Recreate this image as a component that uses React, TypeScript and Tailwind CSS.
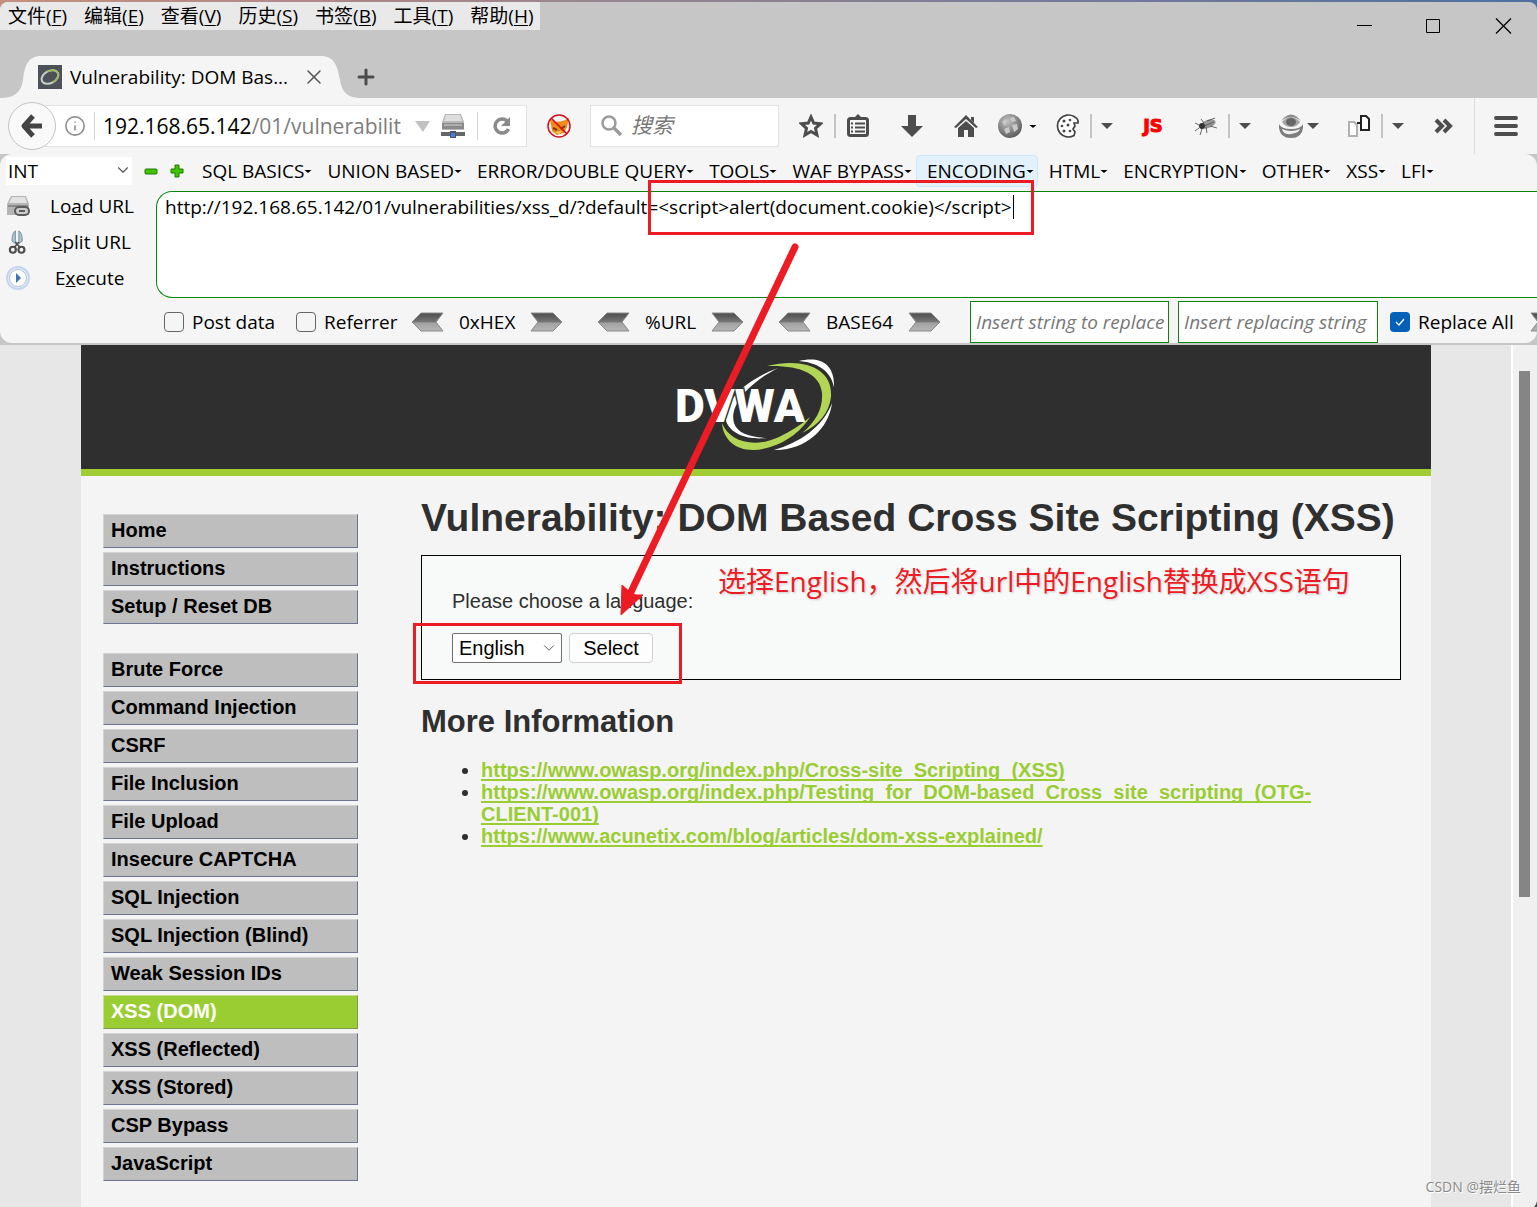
import React from "react";
import { ChevronDown, Info, Plus, X } from "lucide-react";

const UI_FONT = "font-['Open_Sans','Noto_Sans_CJK_SC',sans-serif]";

const appMenus = [
  { label: "文件", mnemonic: "F" },
  { label: "编辑", mnemonic: "E" },
  { label: "查看", mnemonic: "V" },
  { label: "历史", mnemonic: "S" },
  { label: "书签", mnemonic: "B" },
  { label: "工具", mnemonic: "T" },
  { label: "帮助", mnemonic: "H" },
];

const hackMenus = [
  "SQL BASICS",
  "UNION BASED",
  "ERROR/DOUBLE QUERY",
  "TOOLS",
  "WAF BYPASS",
  "ENCODING",
  "HTML",
  "ENCRYPTION",
  "OTHER",
  "XSS",
  "LFI",
];

const navGroups = [
  ["Home", "Instructions", "Setup / Reset DB"],
  [
    "Brute Force",
    "Command Injection",
    "CSRF",
    "File Inclusion",
    "File Upload",
    "Insecure CAPTCHA",
    "SQL Injection",
    "SQL Injection (Blind)",
    "Weak Session IDs",
    "XSS (DOM)",
    "XSS (Reflected)",
    "XSS (Stored)",
    "CSP Bypass",
    "JavaScript",
  ],
];

const links = [
  "https://www.owasp.org/index.php/Cross-site_Scripting_(XSS)",
  "https://www.owasp.org/index.php/Testing_for_DOM-based_Cross_site_scripting_(OTG-CLIENT-001)",
  "https://www.acunetix.com/blog/articles/dom-xss-explained/",
];

const Caret = () => (
  <svg className="w-3 h-2 shrink-0" viewBox="0 0 12 8" fill="#4d4d4d">
    <path d="M0 1h12L6 7z" />
  </svg>
);

const SmallCaret = () => (
  <svg className="w-2 h-2 shrink-0" viewBox="0 0 8 8">
    <path d="M0.500 3h7L4 6z" />
  </svg>
);

const Divider = () => <span className="w-0.5 h-6 bg-[#c4c4c4] shrink-0" />;

interface ToolProps {
  label: string;
  children: React.ReactNode;
}

const Tool = ({ label, children }: ToolProps) => (
  <button aria-label={label} className="w-6 h-6 shrink-0">
    {children}
  </button>
);

const ArrowButton = ({ right, label }: { right?: boolean; label: string }) => (
  <button aria-label={label} className="shrink-0">
    <svg width="34" height="20" viewBox="0 0 34 20">
      <defs>
        <linearGradient id="steel" x1="0" y1="0" x2="0" y2="1">
          <stop offset="0" stopColor="#4c4c4c" />
          <stop offset="0.500" stopColor="#777" />
          <stop offset="0.550" stopColor="#a2a2a2" />
          <stop offset="1" stopColor="#b5b5b5" />
        </linearGradient>
      </defs>
      <path
        d={right ? "M2 1H24L33 10L24 19H2L9 10z" : "M32 1H10L1 10L10 19H32L25 10z"}
        fill="url(#steel)"
        stroke="#8a8a8a"
      />
    </svg>
  </button>
);

const TitleBar = () => (
  <header className="bg-[#c6c6c6] rounded-t-lg flex items-start justify-between h-24">
    <div className="flex flex-col">
      <nav className="flex h-7 w-[540px] items-center gap-[17px] rounded-tl-lg bg-[#e9e9e9] pl-2 text-[19px] leading-7 whitespace-nowrap">
        {appMenus.map((menu) => (
          <button key={menu.mnemonic}>
            {menu.label}(<u className="underline-offset-2">{menu.mnemonic}</u>)
          </button>
        ))}
      </nav>
      <div className="mt-[26px] flex items-center">
        <div className="relative flex h-[42px] w-[346px] items-center pl-[38px]">
          <svg
            className="absolute top-0 left-0"
            width="362"
            height="42"
            viewBox="0 0 362 42"
            fill="#f5f5f5"
          >
            <path d="M0 42C15 42 21 36 23 24C25 7 29 0 42 0H320C333 0 337 7 340 24C342 36 347 42 362 42z" />
          </svg>
          <svg className="relative" width="24" height="24" viewBox="0 0 24 24">
            <rect width="24" height="24" fill="#4d525a" />
            <g fill="none" transform="rotate(-28 12 12)">
              <ellipse cx="12" cy="12" rx="9" ry="6" stroke="#c9d0c6" strokeWidth="2" />
              <path d="M12 6C18 6 21 9 21 12S17 18 12 18" stroke="#9dbb4a" strokeWidth="1.500" />
            </g>
          </svg>
          <span className="relative ml-2 w-[222px] text-[19px] leading-6 whitespace-nowrap">
            Vulnerability: DOM Bas...
          </span>
          <button aria-label="Close tab" className="relative ml-2.5">
            <X className="size-6 text-[#555]" strokeWidth={1.5} />
          </button>
        </div>
        <button aria-label="New tab" className="relative ml-2">
          <Plus className="size-6 text-[#4a4a4a]" strokeWidth={3} />
        </button>
      </div>
    </div>
    <div className="flex items-center gap-[50px] pt-3 pr-6">
      <button aria-label="Minimize">
        <svg width="16" height="20" viewBox="0 0 16 20">
          <path d="M0 11.500H15" stroke="#000" />
        </svg>
      </button>
      <button aria-label="Maximize">
        <svg width="20" height="20" viewBox="0 0 20 20">
          <path d="M3.500 5.500H16.500V18.500H3.500z" stroke="#000" fill="none" />
        </svg>
      </button>
      <button aria-label="Close">
        <svg width="20" height="20" viewBox="0 0 20 20">
          <path d="M3 4.500L18 19.500M18 4.500L3 19.500" stroke="#000" strokeWidth="1.300" />
        </svg>
      </button>
    </div>
  </header>
);

const AddressBar = () => (
  <div className="flex min-w-0 flex-1 items-center">
    <button
      aria-label="Back"
      className="relative z-10 flex size-12 shrink-0 items-center justify-center rounded-full border border-[#c4c4c4] bg-[#f9f9f9]"
    >
      <svg width="24" height="24" viewBox="0 0 24 24" fill="none" stroke="#444" strokeWidth="5">
        <path d="M13 2L4 12L13 22M4 12H22" strokeLinejoin="round" />
      </svg>
    </button>
    <div className="-ml-6 flex h-[42px] min-w-0 flex-1 items-center border border-[#e2e2e2] bg-white pl-[31px]">
      <Info className="size-[22px] shrink-0 text-[#8d8d8d]" strokeWidth={1.75} />
      <span className="ml-2 h-7 w-px shrink-0 bg-[#d5d5d5]" />
      <span className="ml-2 min-w-0 flex-1 text-[21px] leading-8 whitespace-nowrap text-[#7d7d7d]">
        <span className="text-black">192.168.65.142</span>/01/vulnerabilit
      </span>
      <svg className="ml-2 shrink-0" width="16" height="12" viewBox="0 0 16 12" fill="#c1c1c1">
        <path d="M0 1H15L8 12z" />
      </svg>
      <svg className="ml-2.5 shrink-0" width="24" height="24" viewBox="0 0 24 24">
        <path d="M4 0H20L23 8V16H1V8z" fill="#b8b8b8" />
        <path d="M5 1H19L21 7H3z" fill="#dedede" />
        <path d="M1 9H23V15H1z" fill="#8a8a8a" />
        <path d="M3 11H21" stroke="#d5d5d5" />
        <path d="M0 18H24V22H0z" fill="#666" />
        <path d="M9 17H15V24H9z" fill="#555" />
        <rect x="10" y="19" width="4" height="4" fill="#3f82ee" />
      </svg>
      <span className="ml-3 h-7 w-px shrink-0 bg-[#d5d5d5]" />
      <button aria-label="Reload" className="mx-3 shrink-0">
        <svg width="24" height="24" viewBox="0 0 24 24">
          <path d="M17 7A7 7 0 1 0 18.500 15" fill="none" stroke="#8a8a8a" strokeWidth="3.500" />
          <path d="M20 3V12H11z" fill="#8a8a8a" />
        </svg>
      </button>
    </div>
  </div>
);

const Toolbar = () => (
  <div className="flex h-14 items-center bg-[#f5f5f5] pl-2">
    <AddressBar />
    <button aria-label="FoxyProxy" className="ml-5 shrink-0">
      <svg width="24" height="24" viewBox="0 0 24 24">
        <path d="M3 5L8 8L16 7L22 4L20 13L17 19L10 21L5 17z" fill="#f08a1c" />
        <path d="M6 14L10 16M14 15L18 12" stroke="#7c3d05" strokeWidth="2" />
        <path d="M8 18L16 17L12 20z" fill="#fbd26b" />
        <circle cx="12" cy="12" r="11" fill="none" stroke="#d5101c" strokeWidth="1.500" />
        <path d="M4 4L20 20" stroke="#d5101c" strokeWidth="1.700" />
      </svg>
    </button>
    <label className="ml-[19px] flex h-[42px] w-[189px] shrink-0 items-center border border-[#e2e2e2] bg-white pl-2.5">
      <svg width="22" height="22" viewBox="0 0 22 22" fill="none" stroke="#9b9b9b">
        <circle cx="8" cy="8" r="6.500" strokeWidth="2.500" />
        <path d="M13 13L20 20" strokeWidth="3.500" />
      </svg>
      <input
        aria-label="搜索"
        placeholder="搜索"
        className="ml-2 w-32 text-[21px] italic outline-none placeholder:text-[#777]"
      />
    </label>
    <div className="ml-5 flex shrink-0 items-center">
      <Tool label="Bookmark">
        <svg viewBox="0 0 24 24" fill="none" stroke="#4d4d4d" strokeWidth="3">
          <path d="M12 3L14.700 9L21.500 9.700L16.500 14.300L18 21L12 17.500L6 21L7.500 14.300L2.500 9.700L9.300 9z" />
        </svg>
      </Tool>
      <span className="ml-[11px]" />
      <Divider />
      <span className="ml-2.5" />
      <Tool label="Bookmarks list">
        <svg viewBox="0 0 24 24">
          <path d="M8 4L12 0L16 4z" fill="#4d4d4d" />
          <rect x="2.500" y="4.500" width="19" height="17" rx="2" fill="none" stroke="#4d4d4d" strokeWidth="3" />
          <path d="M5 9.500H7M9 9.500H19M5 13.500H7M9 13.500H19M5 17.500H7M9 17.500H19" stroke="#4d4d4d" strokeWidth="2" />
        </svg>
      </Tool>
      <span className="ml-[30px]" />
      <Tool label="Downloads">
        <svg viewBox="0 0 24 24" fill="#4d4d4d">
          <path d="M8 1H16V12H23L12 23L1 12H8z" />
        </svg>
      </Tool>
      <span className="ml-[30px]" />
      <Tool label="Home">
        <svg viewBox="0 0 24 24" fill="#4d4d4d">
          <path d="M12 1L24 13L22 14L12 5L2 14L0 13z" />
          <path d="M12 7L20 14V23H14V16H10V23H4V14z" />
          <path d="M17 3H20V9L17 6z" />
        </svg>
      </Tool>
      <span className="ml-5" />
      <Tool label="Globe">
        <svg viewBox="0 0 24 24">
          <defs>
            <radialGradient id="ball" cx="0.400" cy="0.300" r="0.700">
              <stop offset="0" stopColor="#c2c2c2" />
              <stop offset="1" stopColor="#5e5e5e" />
            </radialGradient>
          </defs>
          <circle cx="12" cy="12" r="12" fill="url(#ball)" />
          <path
            d="M4 8L7 5L9 8L7 12zM12 4L16 3L18 7L14 8zM14 11L19 10L20 15L16 18zM6 15L11 13L12 18L8 20z"
            fill="#c9c9c9"
          />
        </svg>
      </Tool>
      <span className="ml-[7px]" />
      <SmallCaret />
      <span className="ml-[19px]" />
      <Tool label="Cookies">
        <svg viewBox="0 0 24 24">
          <path
            d="M18 2.500A11 11 0 1 0 18 21.500L19 18L17 15L19 12L18 9L22 9C22.500 6 21 4 18 2.500z"
            fill="#fff"
            stroke="#444"
            strokeWidth="1.700"
          />
          <g fill="#444">
            <circle cx="8" cy="7" r="1.500" />
            <circle cx="14" cy="6" r="1.300" />
            <circle cx="6" cy="12" r="1.300" />
            <circle cx="12" cy="11" r="1.500" />
            <circle cx="8" cy="17" r="1.500" />
            <circle cx="14" cy="17" r="1.300" />
          </g>
        </svg>
      </Tool>
      <span className="ml-2.5" />
      <Divider />
      <span className="ml-[9px]" />
      <Caret />
      <span className="ml-7" />
      <Tool label="JavaScript">
        <svg viewBox="0 0 24 24" className="overflow-visible">
          <text
            x="12"
            y="18"
            textAnchor="middle"
            fill="#f00"
            stroke="#f00"
            strokeWidth="1"
            className="font-['DejaVu_Sans',sans-serif] text-[18px] font-bold"
          >
            JS
          </text>
        </svg>
      </Tool>
      <span className="ml-[29px]" />
      <Tool label="Firebug">
        <svg viewBox="0 0 24 24">
          <ellipse cx="14" cy="10" rx="8" ry="4" fill="#999" transform="rotate(-20 14 10)" />
          <circle cx="8" cy="12" r="3" fill="#333" />
          <path
            d="M5 11L1 9M5 14L1 17M8 15L6 21M12 13L13 19M16 12L23 14M10 9L7 5M13 7L21 4M10 12L20 8"
            stroke="#444"
            strokeWidth="0.800"
            fill="none"
          />
        </svg>
      </Tool>
      <span className="ml-2.5" />
      <Divider />
      <span className="ml-[9px]" />
      <Caret />
      <span className="ml-7" />
      <Tool label="Proxy">
        <svg viewBox="0 0 24 24">
          <path d="M2 7Q12 -6 22 7Q12 -1 2 7" fill="#8a8a8a" />
          <path d="M3 8Q12 -2 21 8Q18 13 12 13T3 8" fill="#a5a5a5" />
          <ellipse cx="12" cy="8" rx="5" ry="4" fill="#666" />
          <path d="M0 10Q2 15 12 15T24 10Q25 24 12 24T0 10" fill="#7d7d7d" />
          <path d="M3 15Q12 19 21 15Q20 19 12 20T3 15" fill="#efefef" />
        </svg>
      </Tool>
      <span className="ml-1" />
      <Caret />
      <span className="ml-7" />
      <Tool label="Pages">
        <svg viewBox="0 0 24 24" fill="#fff" strokeWidth="2">
          <path d="M2 8H7L10 11V22H2z" stroke="#b0b0b0" />
          <path d="M14 2H19L22 5V16H14zM10 9H14" stroke="#222" />
        </svg>
      </Tool>
      <span className="ml-2.5" />
      <Divider />
      <span className="ml-[9px]" />
      <Caret />
      <span className="ml-7" />
      <Tool label="More tools">
        <svg viewBox="0 0 24 24" fill="none" stroke="#4d4d4d" strokeWidth="4">
          <path d="M4 6L10 12L4 18M12 6L18 12L12 18" />
        </svg>
      </Tool>
    </div>
    <span className="ml-[18px] h-14 w-px shrink-0 bg-[#dcdcdc]" />
    <button aria-label="Menu" className="mr-[19px] ml-[19px] shrink-0">
      <svg width="24" height="24" viewBox="0 0 24 24" stroke="#4d4d4d" strokeWidth="4" strokeLinecap="round">
        <path d="M2 4H22M2 12H22M2 20H22" />
      </svg>
    </button>
  </div>
);

const HackBar = () => (
  <section className="overflow-hidden bg-[#c6c6c6] pb-0.5">
    <div className="overflow-hidden rounded-xl bg-[#f5f5f5] text-[19px] leading-6 whitespace-nowrap">
      <div className="flex h-[34px] items-center pl-1.5">
        <div className="relative h-7 w-[126px] shrink-0">
          <select aria-label="Type" className="size-full appearance-none bg-white pl-0.5">
            <option>INT</option>
          </select>
          <ChevronDown className="pointer-events-none absolute top-1 right-0 size-[18px] text-[#555]" strokeWidth={1.5} />
        </div>
        <button aria-label="Remove" className="ml-3 shrink-0">
          <svg width="14" height="14" viewBox="0 0 14 14">
            <rect x="1" y="5" width="12" height="5" rx="1" fill="#3fc400" stroke="#237a00" />
          </svg>
        </button>
        <button aria-label="Add" className="ml-3 shrink-0">
          <svg width="14" height="14" viewBox="0 0 14 14">
            <path d="M5 1H9V5H13V9H9V13H5V9H1V5H5z" fill="#3fc400" stroke="#237a00" />
          </svg>
        </button>
        <nav className="ml-[7px] flex">
          {hackMenus.map((menu) => (
            <button
              key={menu}
              className={
                menu === "ENCODING"
                  ? "flex h-8 items-center rounded-sm bg-[#e3f1fc] pr-1 pl-[11px] outline -outline-offset-1 outline-[#cce6fb]"
                  : "flex h-8 items-center pr-1 pl-[11px]"
              }
            >
              {menu}
              <SmallCaret />
            </button>
          ))}
        </nav>
      </div>

      <div className="flex">
        <div className="w-[156px] shrink-0 pl-1.5">
          <button className="flex h-9 w-full items-center">
            <svg className="mr-5 size-6" viewBox="0 0 24 24">
              <path d="M5 2H20L23 10V21H1V10z" fill="#b5b5b5" />
              <path d="M6 3H19L21 9H3z" fill="#e2e2e2" />
              <path d="M2 11H22V13H2z" fill="#8c8c8c" />
              <rect x="9" y="13" width="14" height="8" rx="4" fill="#ccc" stroke="#5c5c5c" strokeWidth="2" />
              <path d="M13 17H19" stroke="#5c5c5c" strokeWidth="2" />
            </svg>
            <span>
              Lo<u>a</u>d URL
            </span>
          </button>
          <button className="flex h-9 w-full items-center">
            <svg className="mr-[22px] size-6" viewBox="0 0 24 28">
              <path d="M9 16V1Q5 3 5 13zM13 16V1Q17 3 17 13z" fill="#a9c5d1" stroke="#6f8e9c" />
              <path d="M9 14L14 20M13 14L8 20" stroke="#555" strokeWidth="2" />
              <circle cx="6" cy="23" r="3.500" fill="none" stroke="#4d4d4d" strokeWidth="2.500" />
              <circle cx="16" cy="23" r="3.500" fill="none" stroke="#4d4d4d" strokeWidth="2.500" />
            </svg>
            <span>
              <u>S</u>plit URL
            </span>
          </button>
          <button className="flex h-9 w-full items-center">
            <svg className="mr-[25px] size-6" viewBox="0 0 24 24">
              <circle cx="12" cy="12" r="11" fill="#e8effa" stroke="#c3d5ef" strokeWidth="2" />
              <circle cx="12" cy="12" r="8.500" fill="#fff" stroke="#b3c0d4" />
              <path d="M10 7L15 12L10 17z" fill="#3b72b8" />
            </svg>
            <span>
              E<u>x</u>ecute
            </span>
          </button>
        </div>
        <div className="relative mt-[3px] flex min-w-0 flex-1">
          <textarea
            aria-label="URL"
            className="h-[107px] min-w-0 flex-1 resize-none rounded-l-2xl border border-r-0 border-[#0a850a] bg-white px-2 py-[3px] outline-none"
            defaultValue="http://192.168.65.142/01/vulnerabilities/xss_d/?default=<script>alert(document.cookie)</script>"
          />
          <span className="absolute top-1 left-[857px] h-6 w-px bg-black" />
        </div>
      </div>

      <div className="flex h-[45px] items-center pt-[3px] pl-[164px]">
        <label className="flex w-[132px] shrink-0 items-center gap-2">
          <input type="checkbox" className="size-5 appearance-none rounded-sm border border-[#666]" />
          Post data
        </label>
        <label className="flex w-[115px] shrink-0 items-center gap-2">
          <input type="checkbox" className="size-5 appearance-none rounded-sm border border-[#666]" />
          Referrer
        </label>
        <div className="flex w-[186px] shrink-0 items-center gap-3.5">
          <ArrowButton label="Decode hex" />
          <span>0xHEX</span>
          <ArrowButton right label="Encode hex" />
        </div>
        <div className="flex w-[181px] shrink-0 items-center gap-3.5">
          <ArrowButton label="Decode URL" />
          <span>%URL</span>
          <ArrowButton right label="Encode URL" />
        </div>
        <div className="flex w-48 shrink-0 items-center gap-3.5">
          <ArrowButton label="Decode base64" />
          <span>BASE64</span>
          <ArrowButton right label="Encode base64" />
        </div>
        <input
          aria-label="Insert string to replace"
          placeholder="Insert string to replace"
          className="h-[42px] w-[199px] shrink-0 border border-[#0a850a] bg-white pl-[5px] italic outline-none placeholder:text-[#777]"
        />
        <input
          aria-label="Insert replacing string"
          placeholder="Insert replacing string"
          className="ml-[9px] h-[42px] w-[200px] shrink-0 border border-[#0a850a] bg-white pl-[5px] italic outline-none placeholder:text-[#777]"
        />
        <label className="ml-3 flex w-[139px] shrink-0 items-center gap-2">
          <span className="relative flex size-5">
            <input type="checkbox" defaultChecked className="size-5 appearance-none rounded-sm bg-[#0560b8]" />
            <svg className="absolute inset-0 size-5" viewBox="0 0 20 20" fill="none" stroke="#fff">
              <path d="M6 10L9 13L14 7" strokeWidth="1.300" />
            </svg>
          </span>
          Replace All
        </label>
        <ArrowButton right label="Replace" />
      </div>
    </div>
  </section>
);

const Logo = () => (
  <svg width="158" height="92" viewBox="0 0 158 92">
    <path d="M101 9C70 20 44 44 49 62C54 76 72 81 90 79C72 78 60 74 57 64C52 46 72 24 101 9z" fill="#fff" />
    <text
      x="-2"
      y="63"
      fill="#fff"
      stroke="#2f2f2f"
      strokeWidth="3"
      paintOrder="stroke"
      className="font-['Roboto',sans-serif] text-[46px] font-black"
    >
      DVWA
    </text>
    <path
      d="M90 7C128 -2 156 10 154 38C152 54 142 66 125 74C140 62 146 48 145 34C143 14 122 6 90 7z"
      fill="#b2d556"
    />
    <path d="M45 64C52 82 76 90 102 78C114 72 124 66 133 58C122 76 100 90 76 91C58 91 46 80 45 64z" fill="#b2d556" />
    <path d="M122 2C142 -3 158 4 157 28C154 14 144 4 122 2z" fill="#fff" />
    <path d="M155 44C152 70 128 92 97 91C122 84 146 68 155 44z" fill="#fff" />
  </svg>
);

const Sidebar = () => (
  <nav className="w-[255px] shrink-0 pt-[38px] text-[20px] leading-6 font-bold text-black">
    {navGroups.map((group) => (
      <ul key={group[0]} className="mb-[29px] flex flex-col gap-1">
        {group.map((item) => (
          <li key={item}>
            <a
              href="#"
              className={
                item === "XSS (DOM)"
                  ? "block h-[34px] border border-[#c8dd96] border-r-[#7f9a53] border-b-[#7f9a53] bg-[#9acd32] px-[7px] py-[3px] text-white"
                  : "block h-[34px] border border-[#d3d3d3] border-r-[#6b7590] border-b-[#6b7590] bg-[#bebebe] px-[7px] py-[3px]"
              }
            >
              {item}
            </a>
          </li>
        ))}
      </ul>
    ))}
  </nav>
);

const Content = () => (
  <main className="min-w-0 flex-1 pt-[18px] pr-[30px] pl-[63px] text-[#2f2f2f]">
    <h1 className="text-[39px] leading-[48px] font-bold whitespace-nowrap">
      Vulnerability: DOM Based Cross Site Scripting (XSS)
    </h1>
    <form className="mt-[13px] h-[125px] border border-black bg-[#f8faf9] pt-[33px] pl-[30px]">
      <label htmlFor="lang" className="block text-[20px] leading-6">
        Please choose a language:
      </label>
      <div className="mt-5 flex gap-[7px] text-[20px] leading-6 text-black">
        <div className="relative h-[30px] w-[110px]">
          <select
            id="lang"
            className="size-full appearance-none rounded-xs border border-[#707070] bg-white pl-1.5"
          >
            <option>English</option>
          </select>
          <ChevronDown className="pointer-events-none absolute top-1.5 right-1 size-[18px] text-[#555]" strokeWidth={1.25} />
        </div>
        <button type="button" className="h-[30px] w-[84px] rounded-sm border border-[#cfcfcf] bg-[#fdfdfd]">
          Select
        </button>
      </div>
    </form>
    <h2 className="mt-6 text-[31px] leading-9 font-bold">More Information</h2>
    <ul className="mt-[19px] mr-10 list-disc pl-[60px] text-[20px] leading-[22px]">
      {links.map((link) => (
        <li key={link}>
          <a
            href={link}
            className="font-bold text-[#9acd32] underline decoration-2 underline-offset-2 [text-decoration-skip-ink:none]"
          >
            {link}
          </a>
        </li>
      ))}
    </ul>
  </main>
);

// Red markup drawn over the window
const Annotations = () => (
  <div className="pointer-events-none absolute inset-0 overflow-hidden">
    <div className="absolute top-[180px] left-[648px] h-[55px] w-[386px] border-3 border-[#ed1c24]" />
    <div className="absolute top-[623px] left-[413px] h-[61px] w-[269px] border-3 border-[#ed1c24]" />
    <svg className="absolute top-[240px] left-[600px]" width="210" height="380" viewBox="0 0 210 380">
      <path d="M195 7L31 352" stroke="#ed1c24" strokeWidth="7" strokeLinecap="round" />
      <path d="M21 375L22 345L30 352L36 355L43 355z" fill="#ed1c24" stroke="#ed1c24" />
    </svg>
    <p className="absolute top-[561px] left-[718px] text-[28px] leading-10 whitespace-nowrap text-[#ed1c24] [text-shadow:0_0_3px_#fff,1px_1px_2px_#bbb]">
      选择English，然后将url中的English替换成XSS语句
    </p>
    <p className="absolute right-4 bottom-[13px] text-[14px] leading-5 text-[#8a8a8a] [text-shadow:1px_1px_0_#fff]">
      CSDN @摆烂鱼
    </p>
    <svg className="absolute right-0 bottom-0" width="9" height="9" viewBox="0 0 9 9" fill="#3f4856">
      <path d="M9 0V9H0C5 8 8 5 9 0z" />
    </svg>
  </div>
);

export default function App() {
  return (
    <div
      className={`relative flex min-h-screen flex-col overflow-hidden bg-[#4f6f9f] bg-linear-to-r from-[#c58f80] to-[#4f6f9f] pt-0.5 text-black ${UI_FONT}`}
    >
      <TitleBar />
      <Toolbar />
      <HackBar />
      <div className="flex flex-1 bg-[#e7e7e7] font-['Liberation_Sans',sans-serif]">
        <div className="mr-20 ml-[81px] flex min-w-0 flex-1 flex-col bg-[#f4f4f4]">
          <div className="flex h-[131px] items-start justify-center border-b-7 border-[#a1cc33] bg-[#2f2f2f] pt-3.5">
            <Logo />
          </div>
          <div className="flex pl-[22px]">
            <Sidebar />
            <Content />
          </div>
        </div>
        <div className="w-[26px] shrink-0 border-l-2 border-white bg-[#f0f0f0] pt-[26px] pl-1.5">
          <div className="h-[526px] w-[11px] bg-[#858585]" />
        </div>
      </div>
      <Annotations />
    </div>
  );
}
